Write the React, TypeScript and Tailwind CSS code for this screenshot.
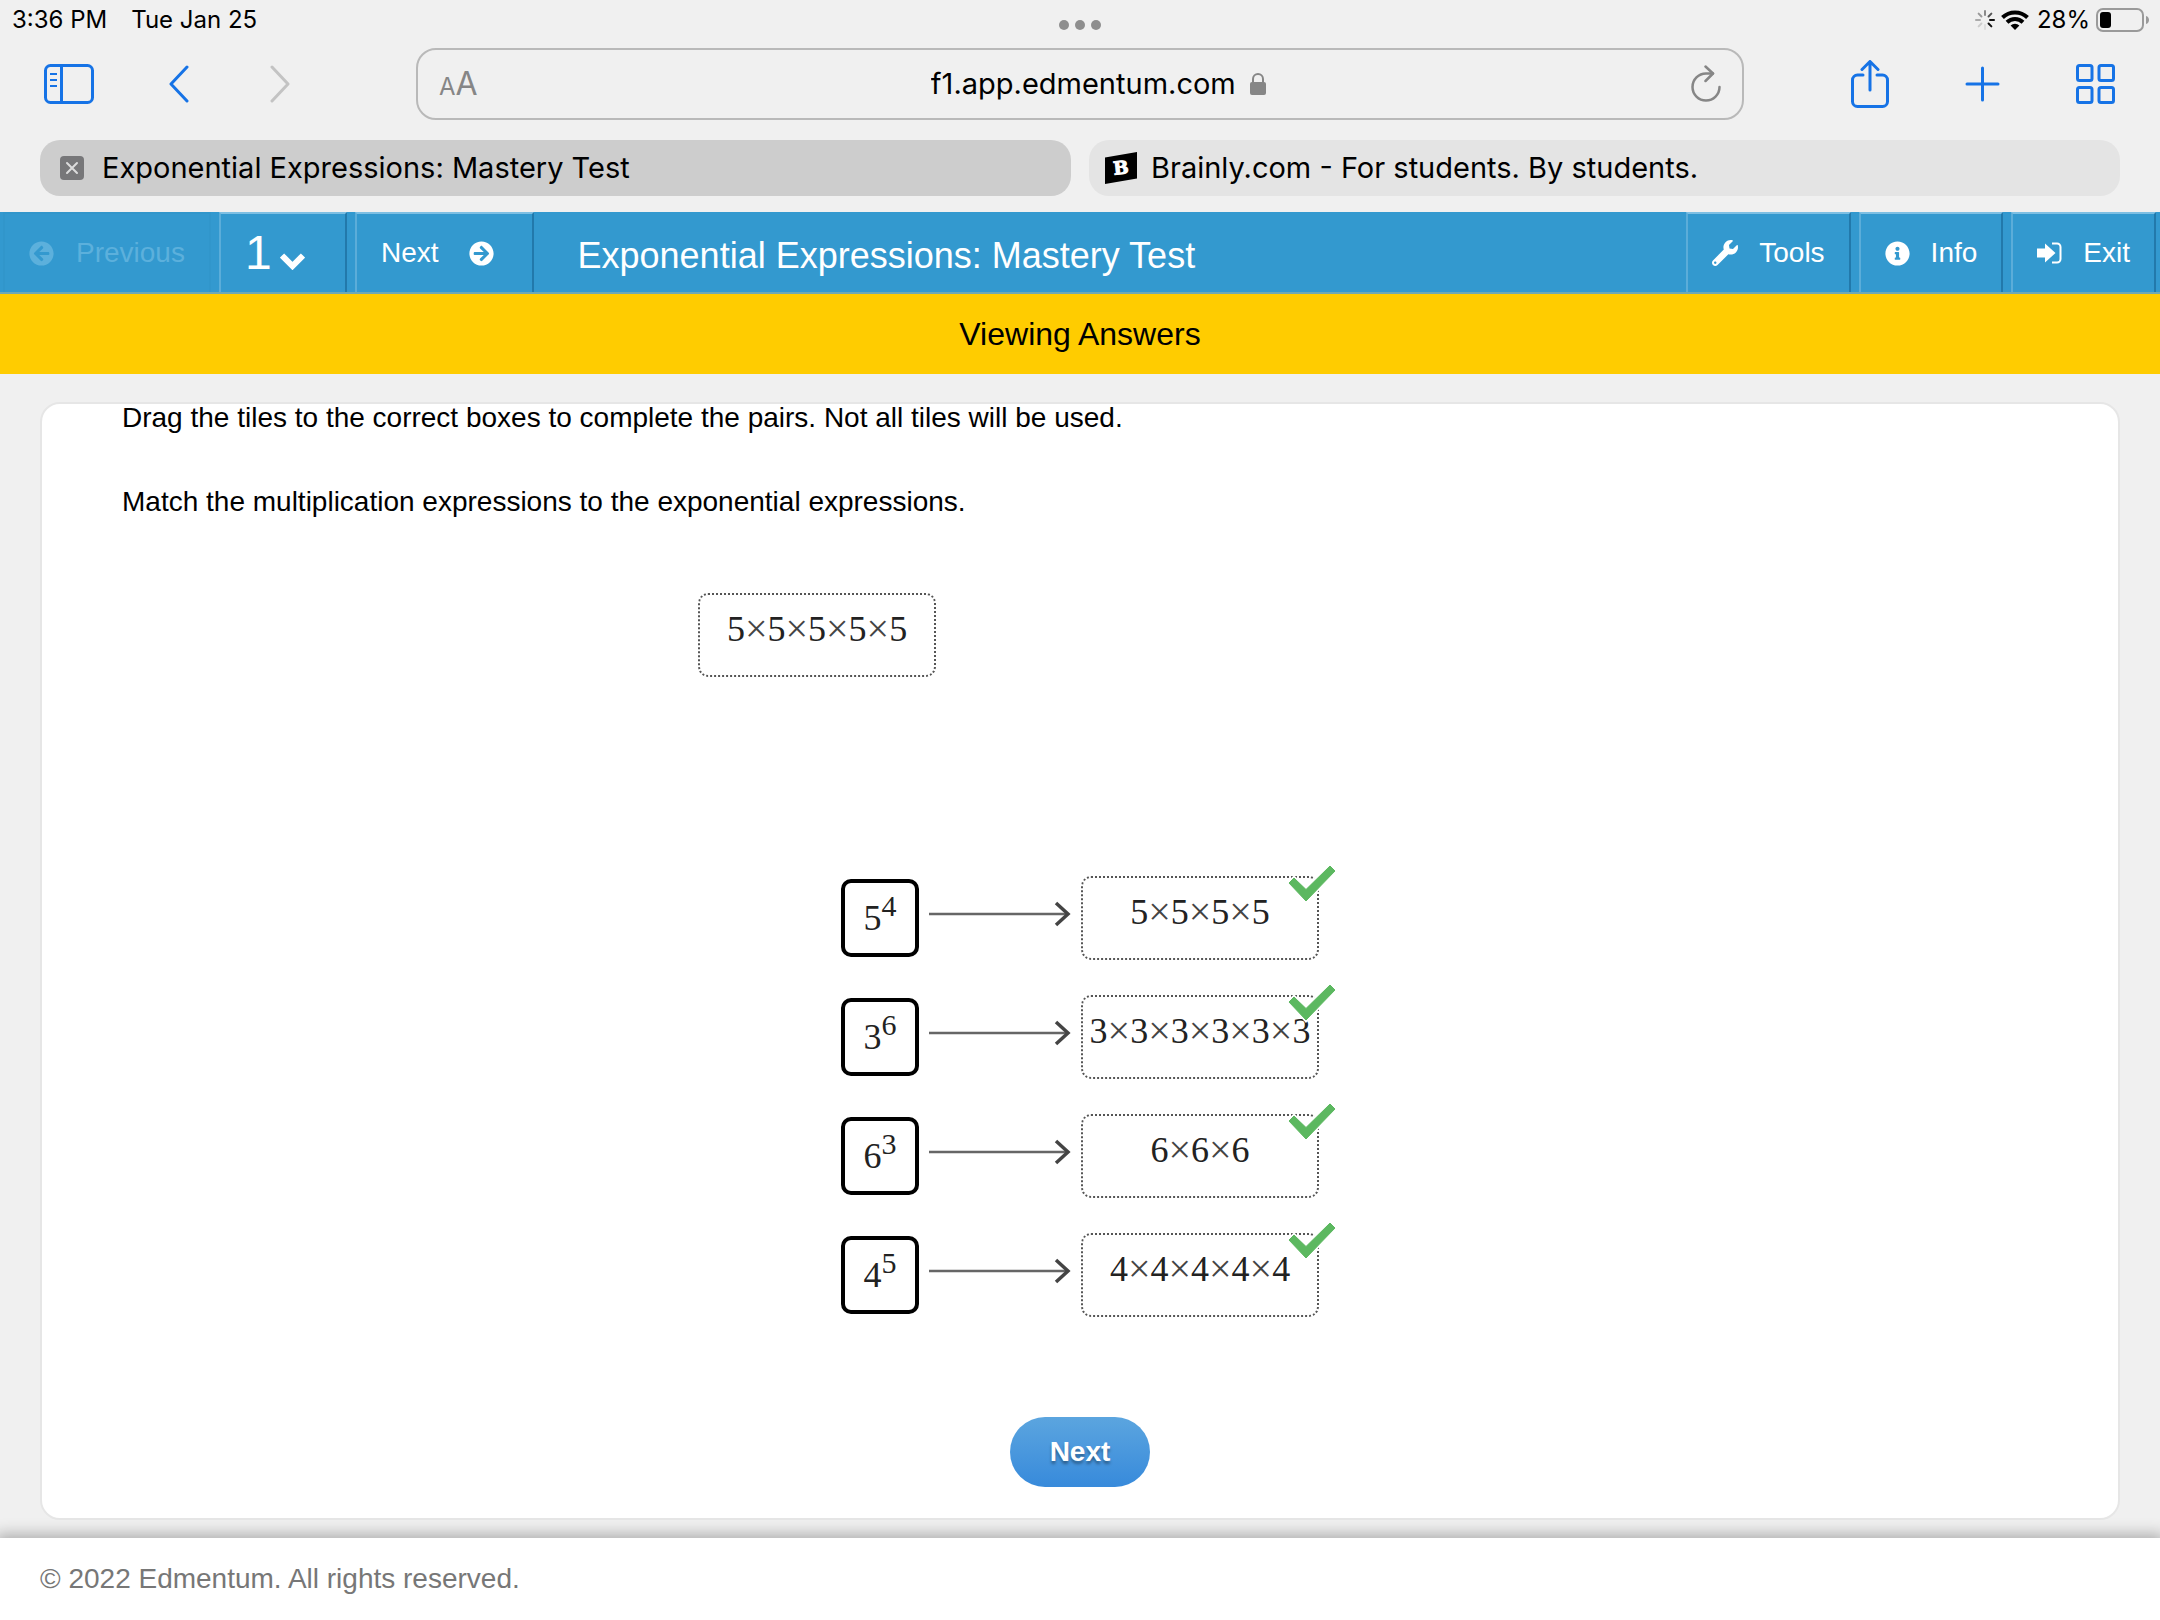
import { Fragment, useState } from 'react';
import type { ReactNode } from 'react';
import { FaArrowCircleLeft, FaArrowCircleRight, FaInfoCircle, FaWrench } from 'react-icons/fa';

const UI_FONT = "font-['Inter','Noto_Sans',sans-serif]";
const PAGE_FONT = "font-['Liberation_Sans',Arial,sans-serif]";
const MATH_FONT = "font-['Liberation_Serif','Times_New_Roman',serif]";

interface Pair {
  base: string;
  exponent: string;
  factors: string[];
}

const pairs: Pair[] = [
  { base: '5', exponent: '4', factors: ['5', '5', '5', '5'] },
  { base: '3', exponent: '6', factors: ['3', '3', '3', '3', '3', '3'] },
  { base: '6', exponent: '3', factors: ['6', '6', '6'] },
  { base: '4', exponent: '5', factors: ['4', '4', '4', '4', '4'] },
];

/* ---------- Browser chrome icons ---------- */

function Spinner() {
  const shades = ['#8a8a8a', '#555', '#111', '#111', '#ddd', '#ccc', '#aaa', '#999'];
  return (
    <svg width="20" height="20" viewBox="0 0 20 20" strokeWidth="2" strokeLinecap="round" aria-hidden="true">
      {shades.map((shade, i) => (
        <line key={i} x1="10" y1="1" x2="10" y2="5" stroke={shade} transform={`rotate(${i * 45} 10 10)`} />
      ))}
    </svg>
  );
}

function Wifi() {
  return (
    <svg width="28" height="20" viewBox="0 0 28 20" fill="none" stroke="#000" strokeWidth="4" aria-hidden="true">
      <path d="M1.5 7.5a18 18 0 0 1 25 0" />
      <path d="M6 12.2a11.5 11.5 0 0 1 16 0" />
      <path d="M14 20l-4.4-4.4a6.4 6.4 0 0 1 8.8 0z" fill="#000" stroke="none" />
    </svg>
  );
}

function Battery() {
  return (
    <svg width="54" height="24" viewBox="0 0 54 24" aria-hidden="true">
      <rect x="1" y="1" width="46" height="22" rx="6" fill="none" stroke="#9a9a9a" strokeWidth="2" />
      <rect x="4" y="4" width="11" height="16" rx="3" fill="#000" />
      <path d="M50 8c4 1 4 7 0 8z" fill="#9a9a9a" />
    </svg>
  );
}

function SidebarIcon() {
  return (
    <svg width="50" height="40" viewBox="0 0 50 40" fill="none" stroke="currentColor" strokeWidth="3" aria-hidden="true">
      <rect x="1.5" y="1.5" width="47" height="37" rx="5" />
      <path d="M17.5 1.5v37" />
      <path d="M6 10h7M6 16h7M6 22h7" strokeWidth="2" />
    </svg>
  );
}

function ShareIcon() {
  return (
    <svg width="38" height="48" viewBox="0 0 38 48" fill="none" stroke="currentColor" strokeWidth="3" strokeLinecap="round" strokeLinejoin="round" aria-hidden="true">
      <path d="M12 15H6.5a5 5 0 0 0-5 5v21.5a5 5 0 0 0 5 5h25a5 5 0 0 0 5-5V20a5 5 0 0 0-5-5H26" />
      <path d="M19 30V2M11 9.5l8-8 8 8" />
    </svg>
  );
}

function GridIcon() {
  return (
    <svg width="39" height="40" viewBox="0 0 39 40" fill="none" stroke="currentColor" strokeWidth="3" aria-hidden="true">
      <rect x="1.5" y="1.5" width="14.5" height="15" rx="2" />
      <rect x="23" y="1.5" width="14.5" height="15" rx="2" />
      <rect x="1.5" y="23.5" width="14.5" height="15" rx="2" />
      <rect x="23" y="23.5" width="14.5" height="15" rx="2" />
    </svg>
  );
}

function BrainlyLogo() {
  return (
    <svg width="32" height="32" viewBox="0 0 32 32" aria-hidden="true">
      <path d="M0 5.5L32 0v26.5L0 32z" fill="#000" />
      <text
        x="16"
        y="22"
        fontSize="18"
        fontWeight="900"
        fill="#fff"
        stroke="#fff"
        textAnchor="middle"
        transform="rotate(-6 16 16)"
        className="font-['DejaVu_Serif',serif]"
      >
        B
      </text>
    </svg>
  );
}

function StatusBar() {
  return (
    <div className="grid h-10 grid-cols-3 items-center px-[10px] text-2xl">
      <div className="flex gap-6 pl-[2px]">
        <span>3:36 PM</span>
        <span>Tue Jan 25</span>
      </div>
      <button type="button" aria-label="Multitasking" className="flex justify-center gap-[6px] pt-[10px]">
        <span className="size-[10px] rounded-full bg-[#8e8e8e]" />
        <span className="size-[10px] rounded-full bg-[#8e8e8e]" />
        <span className="size-[10px] rounded-full bg-[#8e8e8e]" />
      </button>
      <div className="flex items-center justify-end gap-[6px]">
        <Spinner />
        <Wifi />
        <span className="pl-[2px]">28%</span>
        <Battery />
      </div>
    </div>
  );
}

function Toolbar() {
  return (
    <div className="flex items-center pl-11 pr-[45px] pt-2 text-[#1673e6]">
      <button type="button" aria-label="Show sidebar">
        <SidebarIcon />
      </button>
      <button type="button" aria-label="Back" className="ml-[75px]">
        <svg width="20" height="38" viewBox="0 0 20 38" fill="none" stroke="currentColor" strokeWidth="3" strokeLinecap="round" strokeLinejoin="round">
          <path d="M18 2L2 19l16 17" />
        </svg>
      </button>
      <button type="button" aria-label="Forward" disabled className="ml-[81px] text-[#c3c3c3]">
        <svg width="20" height="38" viewBox="0 0 20 38" fill="none" stroke="currentColor" strokeWidth="3" strokeLinecap="round" strokeLinejoin="round">
          <path d="M2 2l16 17L2 36" />
        </svg>
      </button>
      <div className="ml-[126px] flex h-[72px] flex-1 items-center rounded-[20px] border-2 border-[#b9b9b9] px-[21px]">
        <button type="button" aria-label="Page settings" className="flex items-baseline text-[#868686]">
          <span className="text-2xl">A</span>
          <span className="text-[32px] leading-10">A</span>
        </button>
        <div className="flex flex-1 items-center justify-center gap-[14px] pl-7">
          <input
            type="text"
            aria-label="Address"
            defaultValue="f1.app.edmentum.com"
            className="field-sizing-content bg-transparent text-[29px] text-black outline-none"
          />
          <svg width="16" height="24" viewBox="0 0 16 24" aria-hidden="true">
            <rect y="10" width="16" height="13" rx="2" fill="#868686" />
            <path d="M3 11V7a5 5 0 0 1 10 0v4" fill="none" stroke="#868686" strokeWidth="2" />
          </svg>
        </div>
        <button type="button" aria-label="Reload" className="text-[#868686]">
          <svg width="30" height="38" viewBox="0 0 30 38" fill="none" stroke="currentColor" strokeWidth="2.5" strokeLinecap="round" strokeLinejoin="round">
            <path d="M28.5 22A13.5 13.5 0 1 1 15 8.5h7" />
            <path d="M14.5 1.5l7.5 7-7.5 7.5" />
          </svg>
        </button>
      </div>
      <button type="button" aria-label="Share" className="ml-[107px]">
        <ShareIcon />
      </button>
      <button type="button" aria-label="New tab" className="ml-[76px]">
        <svg width="35" height="36" viewBox="0 0 35 36" fill="none" stroke="currentColor" strokeWidth="3" strokeLinecap="round">
          <path d="M17.5 2v32M2 18h31" />
        </svg>
      </button>
      <button type="button" aria-label="Tab overview" className="ml-[76px]">
        <GridIcon />
      </button>
    </div>
  );
}

function BrowserTabs() {
  return (
    <div className="mb-4 mt-5 grid grid-cols-2 gap-[18px] px-10 text-[29px]">
      <div className="flex h-14 items-center gap-[18px] rounded-[20px] bg-[#cdcdcd] pl-5">
        <button type="button" aria-label="Close tab" className="rounded bg-[#777779] text-[#dcdcdc]">
          <svg width="24" height="24" viewBox="0 0 24 24" fill="none" stroke="currentColor" strokeWidth="2" strokeLinecap="round">
            <path d="M7 7l10 10M17 7L7 17" />
          </svg>
        </button>
        <span>Exponential Expressions: Mastery Test</span>
      </div>
      <div className="flex h-14 items-center gap-[14px] rounded-[20px] bg-[#e4e4e4] pl-4">
        <BrainlyLogo />
        <span>Brainly.com - For students. By students.</span>
      </div>
    </div>
  );
}

/* ---------- Test player ---------- */

const raisedEdges = 'border-2 border-b-0 border-l-[#5badd9] border-r-[#2279ab] border-t-[#7dbfe3]';

function NavButton({ icon, children }: { icon: ReactNode; children: ReactNode }) {
  return (
    <button type="button" className={`flex items-center gap-[21px] px-6 ${raisedEdges}`}>
      {icon}
      <span>{children}</span>
    </button>
  );
}

function PlayerNav() {
  const [question, setQuestion] = useState('1');

  return (
    <nav className="flex h-[82px] gap-2 border-b-2 border-[#6fa9b5] bg-[#3399cf] pl-[3px] pr-1 text-[28px] text-white">
      <button
        type="button"
        disabled
        className="flex items-center gap-[22px] border-2 border-b-0 border-[#3196cb] px-6 text-[#5cb0dc]"
      >
        <FaArrowCircleLeft size={25} />
        <span>Previous</span>
      </button>
      <label className={`flex items-center gap-2 pl-6 pr-10 ${raisedEdges}`}>
        <select
          aria-label="Question"
          value={question}
          onChange={(e) => setQuestion(e.target.value)}
          className="appearance-none bg-transparent text-5xl outline-none"
        >
          <option value="1">1</option>
        </select>
        <svg width="25" height="17" viewBox="0 0 25 17" fill="none" stroke="currentColor" strokeWidth="6" className="mt-4" aria-hidden="true">
          <path d="M2 2.5L12.5 13 23 2.5" />
        </svg>
      </label>
      <button type="button" className={`flex items-center gap-[30px] pl-6 pr-[38px] ${raisedEdges}`}>
        <span>Next</span>
        <FaArrowCircleRight size={25} />
      </button>
      <h1 className="flex flex-1 items-center pl-9 pt-2 text-4xl">Exponential Expressions: Mastery Test</h1>
      <NavButton icon={<FaWrench size={26} />}>Tools</NavButton>
      <NavButton icon={<FaInfoCircle size={25} />}>Info</NavButton>
      <NavButton
        icon={
          <svg width="25" height="22" viewBox="0 0 25 22" aria-hidden="true">
            <path d="M0 6.5h8V1.500L18.5 11 8 20.5v-5H0z" fill="currentColor" />
            <path d="M15 1.5h5a3.5 3.5 0 0 1 3.5 3.5v12a3.5 3.5 0 0 1-3.5 3.5h-5" fill="none" stroke="currentColor" strokeWidth="2" />
          </svg>
        }
      >
        Exit
      </NavButton>
    </nav>
  );
}

function Tile({ factors }: { factors: string[] }) {
  return (
    <div className={`flex h-[84px] w-[238px] items-center justify-center rounded-[10px] border-2 border-dotted border-[#555] pb-3 text-4xl text-[#222] ${MATH_FONT}`}>
      {factors.map((factor, i) => (
        <Fragment key={i}>
          {i > 0 && <span className="text-[40px] text-[#444]">×</span>}
          <span>{factor}</span>
        </Fragment>
      ))}
    </div>
  );
}

function Arrow() {
  return (
    <svg width="142" height="34" viewBox="0 0 142 34" fill="none" aria-hidden="true">
      <path d="M0 13h138" stroke="#666" strokeWidth="2.5" />
      <path d="M127 2l12 11-12 11" stroke="#444" strokeWidth="3.5" />
    </svg>
  );
}

function CheckMark() {
  const shape = 'M0 17l5-5 12 11.500L41 0l5 5-29 30z';
  return (
    <svg width="52" height="41" viewBox="-3 -3 52 41" className="absolute -right-[19px] -top-[13px]" role="img" aria-label="Correct">
      <path d={shape} fill="#fff" stroke="#fff" strokeWidth="4" />
      <path d={shape} fill="#5cb860" stroke="#5cb860" />
    </svg>
  );
}

function PairRow({ pair }: { pair: Pair }) {
  return (
    <div className="flex items-center gap-[10px]">
      <div className={`flex size-[78px] items-center justify-center rounded-[10px] border-4 border-black text-4xl text-[#222] ${MATH_FONT}`}>
        <span>{pair.base}</span>
        <sup className="-top-3 text-[30px]">{pair.exponent}</sup>
      </div>
      <Arrow />
      <div className="relative">
        <Tile factors={pair.factors} />
        <CheckMark />
      </div>
    </div>
  );
}

export default function App() {
  return (
    <div className={`flex min-h-screen flex-col bg-[#f0f0f0] text-black ${PAGE_FONT}`}>
      <header className={UI_FONT}>
        <StatusBar />
        <Toolbar />
        <BrowserTabs />
      </header>

      <PlayerNav />
      <div className="flex h-20 items-center justify-center bg-[#ffcc00] text-[32px]">Viewing Answers</div>

      <main className="mx-10 mb-[18px] mt-7 flex-1 rounded-[20px] border-2 border-[#e6e6e6] bg-white pb-7 text-[28px] leading-7">
        <div className="px-20">
          <p>Drag the tiles to the correct boxes to complete the pairs. Not all tiles will be used.</p>
          <p className="mt-14">Match the multiplication expressions to the exponential expressions.</p>
        </div>

        {/* Unused tiles */}
        <div className="mx-auto mt-[77px] flex max-w-[764px]">
          <Tile factors={['5', '5', '5', '5', '5']} />
        </div>

        <div className="mt-[199px] flex flex-col items-center gap-[35px]">
          {pairs.map((pair) => (
            <PairRow key={pair.base} pair={pair} />
          ))}
        </div>

        <div className="mt-[100px] flex justify-center">
          <button
            type="button"
            className="h-[70px] rounded-full bg-linear-to-b from-[#5ba5df] to-[#378adb] px-10 font-bold text-white text-shadow-[0_3px_3px_rgba(0,0,0,0.35)]"
          >
            Next
          </button>
        </div>
      </main>

      <footer className="flex h-[82px] items-center bg-white px-10 text-[28px] text-[#777] shadow-[0_0_14px_4px_rgba(0,0,0,0.28)]">
        © 2022 Edmentum. All rights reserved.
      </footer>
    </div>
  );
}
